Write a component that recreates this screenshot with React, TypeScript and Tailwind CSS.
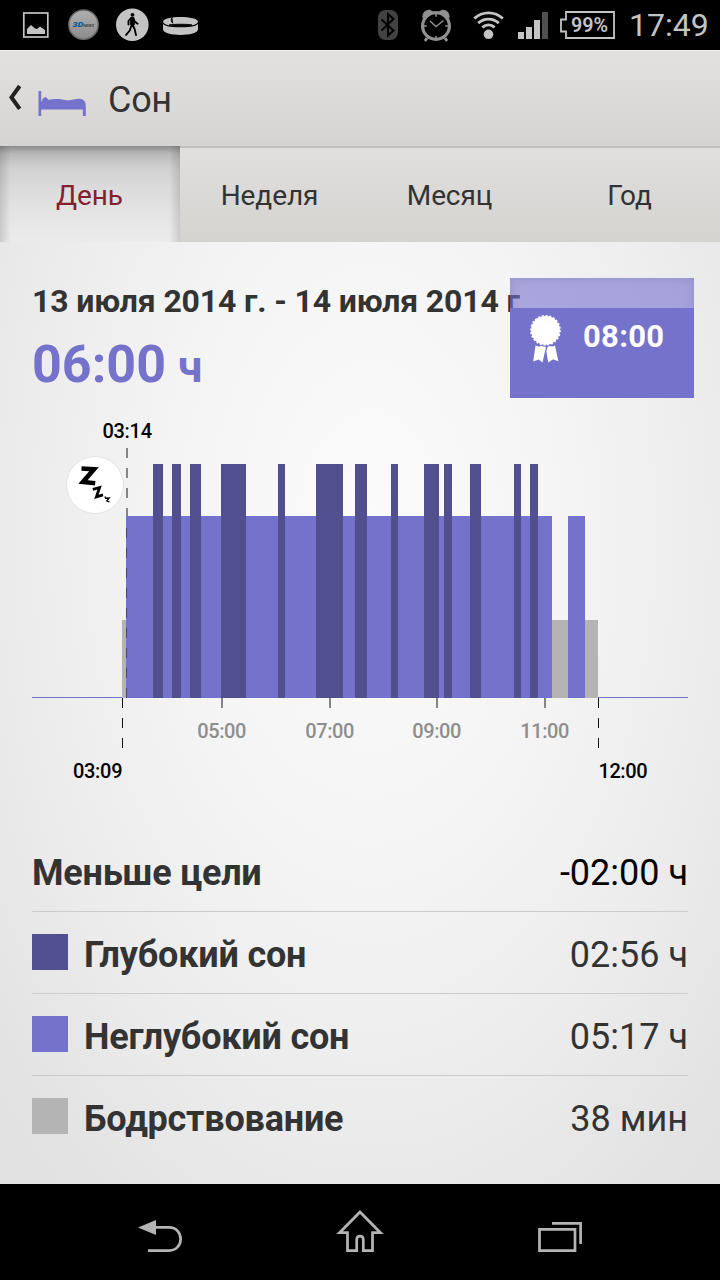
import { clsx } from 'clsx';

const TABS = ['День', 'Неделя', 'Месяц', 'Год'];

const STATS = [
  { name: 'Меньше цели', value: '-02:00 ч' },
  { name: 'Глубокий сон', value: '02:56 ч', color: 'bg-[#514f8e]' },
  { name: 'Неглубокий сон', value: '05:17 ч', color: 'bg-[#7572cb]' },
  { name: 'Бодрствование', value: '38 мин', color: 'bg-[#b4b4b4]' },
];

// [start, end] in chart pixels
const AWAKE = [
  [122, 126],
  [552, 568],
  [585, 598],
];
const LIGHT = [
  [126, 552],
  [568, 585],
];
const DEEP = [
  [153, 163],
  [172, 181],
  [190, 201],
  [221, 246],
  [278, 285],
  [316, 343],
  [355, 367],
  [391, 398],
  [424, 439],
  [444, 452],
  [470, 481],
  [514, 521],
  [530, 538],
];
const HOURS = [
  { label: '05:00', x: 222 },
  { label: '07:00', x: 330 },
  { label: '09:00', x: 437 },
  { label: '11:00', x: 545 },
];

export default function App() {
  return (
    <div className="flex h-[1280px] w-[720px] flex-col overflow-hidden bg-black font-['Roboto',sans-serif] text-[#333]">
      <StatusBar />
      <Header />
      <Tabs />
      <main className="flex h-[942px] flex-col bg-[radial-gradient(640px_1060px_at_370px_290px,#fbfbfb_0%,#f4f4f4_32%,#ebebeb_57%,#e3e3e3_75%,#dfdfdf_100%)]">
        <Summary />
        <SleepChart />
        <div className="mt-[30px] px-8">
          {STATS.map(stat => (
            <StatRow key={stat.name} {...stat} />
          ))}
        </div>
      </main>
      <NavBar />
    </div>
  );
}

function StatusBar() {
  return (
    <div className="flex h-[50px] shrink-0 bg-black">
      <svg width="620" height="50" viewBox="0 0 620 50" fill="none">
        {/* picture */}
        <rect x="23.8" y="13" width="24" height="24" stroke="#c4c4c4" strokeWidth="1.7" />
        <path d="M27 34v-5l4-4 4 3.5 2 .5 3-2.500 5 3.500v4z" fill="#c4c4c4" />
        {/* news badge */}
        <defs>
          <linearGradient id="news" x1="0" y1="0" x2="0" y2="1">
            <stop stopColor="#b0b0b0" />
            <stop offset="1" stopColor="#8b8b8b" />
          </linearGradient>
        </defs>
        <circle cx="83.5" cy="24.7" r="14.7" fill="url(#news)" stroke="#686868" strokeWidth="1.4" />
        <text x="72.5" y="27" fontSize="7" fontWeight="900" fontStyle="italic" fill="#075b9c" textLength="11" lengthAdjust="spacingAndGlyphs">
          3D
        </text>
        <text x="83.5" y="26.5" fontSize="3.8" fontWeight="700" fontStyle="italic" fill="#444" textLength="10.5" lengthAdjust="spacingAndGlyphs">
          NEWS
        </text>
        {/* pedestrian */}
        <circle cx="132.3" cy="24.7" r="16.3" fill="#c4c4c4" />
        <circle cx="132.5" cy="14.8" r="1.9" fill="#000" />
        <path d="M131 17.5h2.7l.8 7-2.6 1.600-1.400-2z" fill="#000" stroke="#000" />
        <path d="M131 18l-2.500 3v3.600M133.500 18.500l1.400 3.300 2.700 2M131.600 25l-1.800 5.500-3.700 4.400M132.800 25l2 4.600 1.200 5.500" stroke="#000" strokeWidth="1.9" strokeLinecap="round" strokeLinejoin="round" />
        {/* wristband */}
        <path d="M163 21.8c0-6.400 35-6.400 35 0v7.500c0 7.600-35 7.600-35 0z" fill="#c4c4c4" />
        <path d="M163 22.600c1 5.600 34 5.600 35 0" stroke="#000" strokeWidth="1.1" />
        <path d="M169 25c4-1 20-1 23 0-5 1.800-18 1.800-23 0zM172.300 17.200c-1.800 2.200-1.200 4.800.9 6.300" fill="#000" stroke="#000" strokeWidth="0.9" />
        {/* bluetooth */}
        <rect x="378" y="10" width="20" height="30" rx="7.5" fill="#424242" />
        <path d="M381.500 19.500l12 11-5.500 5V14l5.500 5-12 11.500" stroke="#000" strokeWidth="2" />
        {/* alarm clock */}
        <circle cx="436" cy="26" r="13.4" stroke="#909090" strokeWidth="3.2" />
        <path d="M422.500 18.500c-1-5 3-9.500 8-8.500l3 2zM449.500 18.500c1-5-3-9.500-8-8.500l-3 2z" fill="#909090" />
        <path d="M427 38l-2 3M445 38l2 3" stroke="#909090" strokeWidth="3" />
        <path d="M430 21l6 5.500 7.500-6M436 14v2.800M436 36v2.800M424 26h2.800M445.200 26h2.800" stroke="#909090" strokeWidth="1.5" />
        {/* wifi */}
        <circle cx="488.5" cy="34.3" r="4.8" fill="#c4c4c4" />
        <path d="M474.300 18.500c8-7.500 20.500-7.500 28.500 0M478.200 23.200c6-5.400 14.600-5.400 20.600 0M482.400 27.400c3.600-3.100 8.600-3.100 12.200 0" stroke="#c4c4c4" strokeWidth="2.9" />
        {/* signal */}
        <path d="M518 32h6v7h-6zM526 27h6v12h-6zM534 20h6v19h-6z" fill="#c4c4c4" />
        <path d="M542 12h6v27h-6z" fill="#505050" />
        {/* battery */}
        <path d="M566 12h48v26h-48v-6.500h-5v-12h5z" stroke="#c4c4c4" strokeWidth="1.8" />
        <text x="571" y="32" fontSize="20.5" fontWeight="600" fill="#c4c4c4" textLength="37" lengthAdjust="spacingAndGlyphs">
          99%
        </text>
      </svg>
      <span className="mt-[6px] ml-[9px] text-[32px] leading-[38px] whitespace-nowrap text-[#c4c4c4]">17:49</span>
    </div>
  );
}

function Header() {
  return (
    <header className="flex h-24 shrink-0 items-start border-t border-[#f0f0ef] bg-linear-to-b from-[#e2e1e0] to-[#d5d4d2]">
      <svg width="94" height="90" viewBox="0 0 94 90" fill="none">
        <path d="M19.700 35l-8.200 11.400 8.200 11.400" stroke="#222" strokeWidth="4" />
        <path
          d="M38.500 40h2.700v11l1.500-3c1.500-2.600 4.500-2.200 5.500.8 7-1.300 14-.7 20 .8 4-.4 6.500-1.800 11-1.800 4.500 0 6.600 3 6.600 7v10.200h-3v-6.500H41.200v6.500h-2.700z"
          fill="#7572cb"
        />
      </svg>
      <h1 className="mt-[28px] ml-[14px] text-[36px] leading-[42px] tracking-[-0.3px]">Сон</h1>
    </header>
  );
}

function Tabs() {
  return (
    <nav className="grid h-24 shrink-0 grid-cols-4">
      {TABS.map((tab, i) => (
        <div
          key={tab}
          className={clsx(
            'flex items-center justify-center pr-px text-[28px] tracking-[-0.1px]',
            i === 0
              ? 'bg-[linear-gradient(to_right,#0002,transparent_6%,transparent_94%,#0002),linear-gradient(#8c8c8c,#b8b8b8_8%,#d0d0d0_22%,#dadada_40%,#e6e6e6_75%,#ebebeb)] pt-1 text-[#85202f]'
              : 'border-t-2 border-[#bebdbb] bg-linear-to-b from-[#e0dfdd] to-[#d4d3d0] pt-0.5',
          )}
        >
          {tab}
        </div>
      ))}
    </nav>
  );
}

function Summary() {
  return (
    <section className="relative h-[158px] shrink-0 pt-[40px] pl-8">
      <div className="text-[32px] leading-[38px] font-bold tracking-[-0.15px] whitespace-nowrap">
        13 июля 2014 г. - 14 июля 2014 г
      </div>
      <div className="mt-[15px] text-[52px] leading-[60px] font-bold whitespace-nowrap text-[#7572cb]">
        06:00 <span className="-ml-px text-[44px]">ч</span>
      </div>

      {/* Goal badge, its translucent top lies over the end of the date */}
      <div className="absolute top-9 right-[26px] h-[120px] w-[184px] bg-[#7572cb]/60 pt-[30px] shadow-[inset_0_0_10px_#6864b855]">
        <div className="flex h-[90px] bg-[#7572cb] pt-[6px] pl-5">
          <svg width="32" height="50" viewBox="0 0 32 50" fill="#fff">
            <circle cx="15.5" cy="16.3" r="14.4" />
            <circle cx="15.5" cy="16.3" r="14.6" fill="none" stroke="#fff" strokeWidth="1.6" strokeDasharray="2 1.8" />
            <path d="M5.500 31.500l3 1 3-.5 4.500 1-3.500 15.500-3.800-3-5.500 2zM17.500 33l2.500-1 2.500.5 2.500-1 3.300 15.700-5.200-2-4.800 3.300-2-11z" />
          </svg>
          <span className="ml-[21px] text-[31px] leading-[45px] font-bold tracking-[0.3px] text-white">08:00</span>
        </div>
      </div>
    </section>
  );
}

function Bars({ ranges, top, fill }: { ranges: number[][]; top: number; fill: string }) {
  return ranges.map(([start, end]) => (
    <rect key={start} x={start} y={top} width={end - start} height={698 - top} fill={fill} />
  ));
}

function SleepChart() {
  return (
    <svg className="shrink-0" width="720" height="400" viewBox="0 400 720 400" fontSize="20" fontWeight="500">
      <path d="M32 697.5h656" stroke="#7572cb" />
      <g shapeRendering="crispEdges">
        <Bars ranges={AWAKE} top={620} fill="#b4b4b4" />
        <Bars ranges={LIGHT} top={516} fill="#7572cb" />
        <Bars ranges={DEEP} top={464} fill="#514f8e" />
      </g>

      <path d="M127 448v68" stroke="#858585" strokeWidth="2" strokeDasharray="10 10" />
      <path d="M126.5 528v170" stroke="#45446f" strokeDasharray="10 10" />
      <path d="M122.5 698v50M598.5 698v50" stroke="#111" strokeDasharray="10 10" />
      <text x="102.5" y="438" fill="#000" textLength="49.5">
        03:14
      </text>
      <text x="73" y="778" fill="#000" textLength="49.5">
        03:09
      </text>
      <text x="598.5" y="778" fill="#000" textLength="49">
        12:00
      </text>

      {HOURS.map(({ label, x }) => (
        <g key={label}>
          <path d={`M${x} 698v10`} stroke="#858585" strokeWidth="2" />
          <text x={x - 24.7} y="738" fill="#8e8e8e" textLength="49">
            {label}
          </text>
        </g>
      ))}

      <circle cx="95" cy="485" r="28.5" fill="#fff" stroke="#e3e3e3" />
      {/* zzz */}
      <g fill="none" stroke="#000">
        <path d="M81.500 468.500l12.500.8-11 12.700 12.200 1.200" strokeWidth="4.6" />
        <path d="M92.800 489.300l6.800-1.800-3.200 9.300 6.600-2" strokeWidth="2.8" />
        <path d="M105 496.500l.6 1.700 3.600-.2-2.400 3 2.800 1" strokeWidth="1.3" />
      </g>
    </svg>
  );
}

function StatRow({ name, value, color }: { name: string; value: string; color?: string }) {
  return (
    <div className="flex h-[82px] items-center border-b border-[#cbcbcb] pt-1 text-[36px] last:border-b-0">
      {color ? <div className={clsx('mr-4 mb-[6px] size-9', color)} /> : null}
      <div className="font-bold tracking-[-0.2px] whitespace-nowrap">{name}</div>
      <div className={clsx('ml-auto whitespace-nowrap', !color && 'text-black')}>{value}</div>
    </div>
  );
}

function NavBar() {
  return (
    <footer className="h-24 shrink-0 bg-black">
      <svg width="720" height="96" viewBox="0 1184 720 96" fill="none" stroke="#b4b4b4" strokeWidth="2.7">
        <path d="M155 1227.400h14c15.500 0 15.500 23.200 0 23.200h-21" />
        <path d="M138 1227.400l18-7.400v15z" fill="#b4b4b4" stroke="none" />
        <path d="M360 1212l-20.500 20.700h8v17.900h9.200v-11c0-4.600 6.600-4.600 6.600 0v11h9.200v-17.900h8z" />
        <path d="M539.500 1229.400h35.500v21.200h-35.500zM552 1223.400h28.600v20.600" />
      </svg>
    </footer>
  );
}
